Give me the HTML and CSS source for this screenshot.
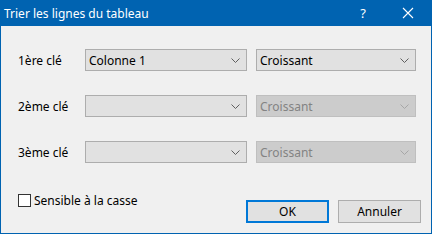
FILE: index.html
```html
<!DOCTYPE html>
<html lang="fr">
<head>
<meta charset="UTF-8">
<title>Trier les lignes du tableau</title>
<link rel="stylesheet" href="styles.css">
</head>
<body>

<div class="window">
    <div class="titlebar">
        <span class="title">Trier les lignes du tableau</span>
        <span class="help">?</span>
        <span class="close">
            <svg width="12" height="12" viewBox="0 0 12 12">
                <path d="M1 1 L11 11 M11 1 L1 11" stroke="#fff" stroke-width="1.1" fill="none"/>
            </svg>
        </span>
    </div>

    <div class="content">
        <div class="keys">
            <div class="label">1ère clé</div>
            <div class="combo">
                <span>Colonne 1</span>
                <svg class="chev" width="9" height="5" viewBox="0 0 9 5"><path d="M0.5 0.5 L4.5 4.5 L8.5 0.5" /></svg>
            </div>
            <div class="combo">
                <span>Croissant</span>
                <svg class="chev" width="9" height="5" viewBox="0 0 9 5"><path d="M0.5 0.5 L4.5 4.5 L8.5 0.5" /></svg>
            </div>

            <div class="label">2ème clé</div>
            <div class="combo">
                <span></span>
                <svg class="chev" width="9" height="5" viewBox="0 0 9 5"><path d="M0.5 0.5 L4.5 4.5 L8.5 0.5" /></svg>
            </div>
            <div class="combo disabled">
                <span>Croissant</span>
                <svg class="chev" width="9" height="5" viewBox="0 0 9 5"><path d="M0.5 0.5 L4.5 4.5 L8.5 0.5" /></svg>
            </div>

            <div class="label">3ème clé</div>
            <div class="combo">
                <span></span>
                <svg class="chev" width="9" height="5" viewBox="0 0 9 5"><path d="M0.5 0.5 L4.5 4.5 L8.5 0.5" /></svg>
            </div>
            <div class="combo disabled">
                <span>Croissant</span>
                <svg class="chev" width="9" height="5" viewBox="0 0 9 5"><path d="M0.5 0.5 L4.5 4.5 L8.5 0.5" /></svg>
            </div>
        </div>

        <div class="bottom">
            <label class="check">
                <span class="box"></span>
                <span>Sensible à la casse</span>
            </label>
            <div class="buttons">
                <button class="btn default">OK</button>
                <button class="btn">Annuler</button>
            </div>
        </div>
    </div>
</div>

</body>
</html>
```

FILE: styles.css
```css
/* --- Page --- */
body {
    margin:0;
    padding:0;
    background:#f0f0f0;
    font-family: "Noto Sans", "Liberation Sans", sans-serif;
    font-size:12px;
    color:#000;
}

/* --- Fenetre --- */
.window {
    width:432px;
    height:234px;
    display:flex;
    flex-direction:column;
}

.titlebar {
    height:26px;
    background:#0063b1;
    color:#fff;
    display:flex;
    align-items:center;
    flex-shrink:0;
}
.title { padding-left:4px; flex:1; }
.help { width:14px; text-align:center; margin-right:32px; font-size:13px; }
.close { width:12px; height:12px; margin-right:18px; display:flex; }

.content {
    flex:1;
    border:1px solid #0063b1;
    border-top:none;
    padding:23px 0 0 17px;
}

/* --- Cles de tri --- */
.keys {
    display:grid;
    grid-template-columns:58px 162px 160px;
    column-gap:9px;
    row-gap:24px;
    align-items:center;
}

.combo {
    height:22px;
    box-sizing:border-box;
    border:1px solid #adadad;
    background:#e1e1e1;
    display:flex;
    align-items:center;
    padding:0 6px 0 3px;
}
.combo span { flex:1; }
.chev { fill:none; stroke:#5f5f5f; stroke-width:1; }

.combo.disabled { background:#cccccc; border-color:#bfbfbf; color:#838383; }
.combo.disabled .chev { stroke:#a6a6a6; }

/* --- Bas --- */
.bottom {
    display:flex;
    margin-top:31px;
    padding-right:10px;
}

.check {
    display:flex;
    align-items:center;
    gap:3px;
    height:13px;
}
.box {
    width:13px;
    height:13px;
    box-sizing:border-box;
    border:1px solid #333;
    background:#fff;
}

.buttons {
    margin-left:auto;
    margin-top:6px;
    display:flex;
    gap:9px;
}
.btn {
    width:83px;
    height:23px;
    box-sizing:border-box;
    border:1px solid #adadad;
    background:#e1e1e1;
    font-family:inherit;
    font-size:12px;
    color:#000;
    padding:0;
}
.btn.default { border:2px solid #0078d7; }
```
